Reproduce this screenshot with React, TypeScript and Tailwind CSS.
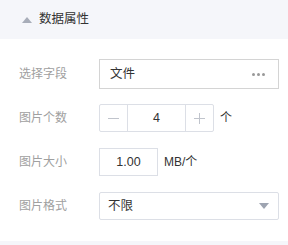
export default function App() {
  const font = { fontFamily: '"Liberation Sans", "Noto Sans CJK SC", sans-serif' };
  return (
    <div className="w-[288px] h-[245px] bg-white flex flex-col" style={font}>
      <div className="h-[39px] bg-[#f5f6fa] flex items-center pl-[22px] shrink-0">
        <svg width="10" height="6" viewBox="0 0 10 6" className="mr-[7px]">
          <polygon points="5,0 10,6 0,6" fill="#a8adb9" />
        </svg>
        <span className="text-[12.5px] text-[#333]">数据属性</span>
      </div>

      <div className="flex flex-col pt-[13px] pb-[13px] pl-[19px] pr-[9px]">
        <div className="h-[44px] flex items-center">
          <span className="w-[80px] shrink-0 text-[12px] text-[#a0a0a0]">选择字段</span>
          <div className="flex-1 h-[30px] border border-[#d4d4d4] flex items-center justify-between pl-[10px] pr-[13px]">
            <span className="text-[12.5px] text-[#333]">文件</span>
            <span className="flex gap-[2px]">
              <span className="w-[3px] h-[3px] bg-[#999] rounded-full" />
              <span className="w-[3px] h-[3px] bg-[#999] rounded-full" />
              <span className="w-[3px] h-[3px] bg-[#999] rounded-full" />
            </span>
          </div>
        </div>

        <div className="h-[44px] flex items-center">
          <span className="w-[80px] shrink-0 text-[12px] text-[#a0a0a0]">图片个数</span>
          <div className="w-[115px] h-[28px] border border-[#dcdfe6] rounded-[2px] flex">
            <div className="w-[28px] border-r border-[#dcdfe6] flex items-center justify-center">
              <span className="w-[11px] h-[1px] bg-[#c0c4cc]" />
            </div>
            <div className="flex-1 flex items-center justify-center text-[12.5px] text-[#333]">4</div>
            <div className="w-[28px] border-l border-[#dcdfe6] flex items-center justify-center">
              <svg width="11" height="11" viewBox="0 0 11 11">
                <path d="M5.5 0V11M0 5.5H11" stroke="#c0c4cc" strokeWidth="1" />
              </svg>
            </div>
          </div>
          <span className="ml-[6px] text-[12px] text-[#333]">个</span>
        </div>

        <div className="h-[44px] flex items-center">
          <span className="w-[80px] shrink-0 text-[12px] text-[#a0a0a0]">图片大小</span>
          <div className="w-[59px] h-[28px] border border-[#dcdfe6] flex items-center justify-center text-[12.5px] text-[#333]">
            1.00
          </div>
          <span className="ml-[6px] text-[12px] text-[#333]">MB/个</span>
        </div>

        <div className="h-[44px] flex items-center">
          <span className="w-[80px] shrink-0 text-[12px] text-[#a0a0a0]">图片格式</span>
          <div className="flex-1 h-[28px] border border-[#dcdfe6] rounded-[2px] flex items-center justify-between pl-[8px] pr-[9px]">
            <span className="text-[12.5px] text-[#333]">不限</span>
            <svg width="10" height="6" viewBox="0 0 10 6">
              <polygon points="0,0 10,0 5,6" fill="#9ea4b1" />
            </svg>
          </div>
        </div>
      </div>

      <div className="flex-1 bg-[#f5f6fa]" />
    </div>
  );
}
